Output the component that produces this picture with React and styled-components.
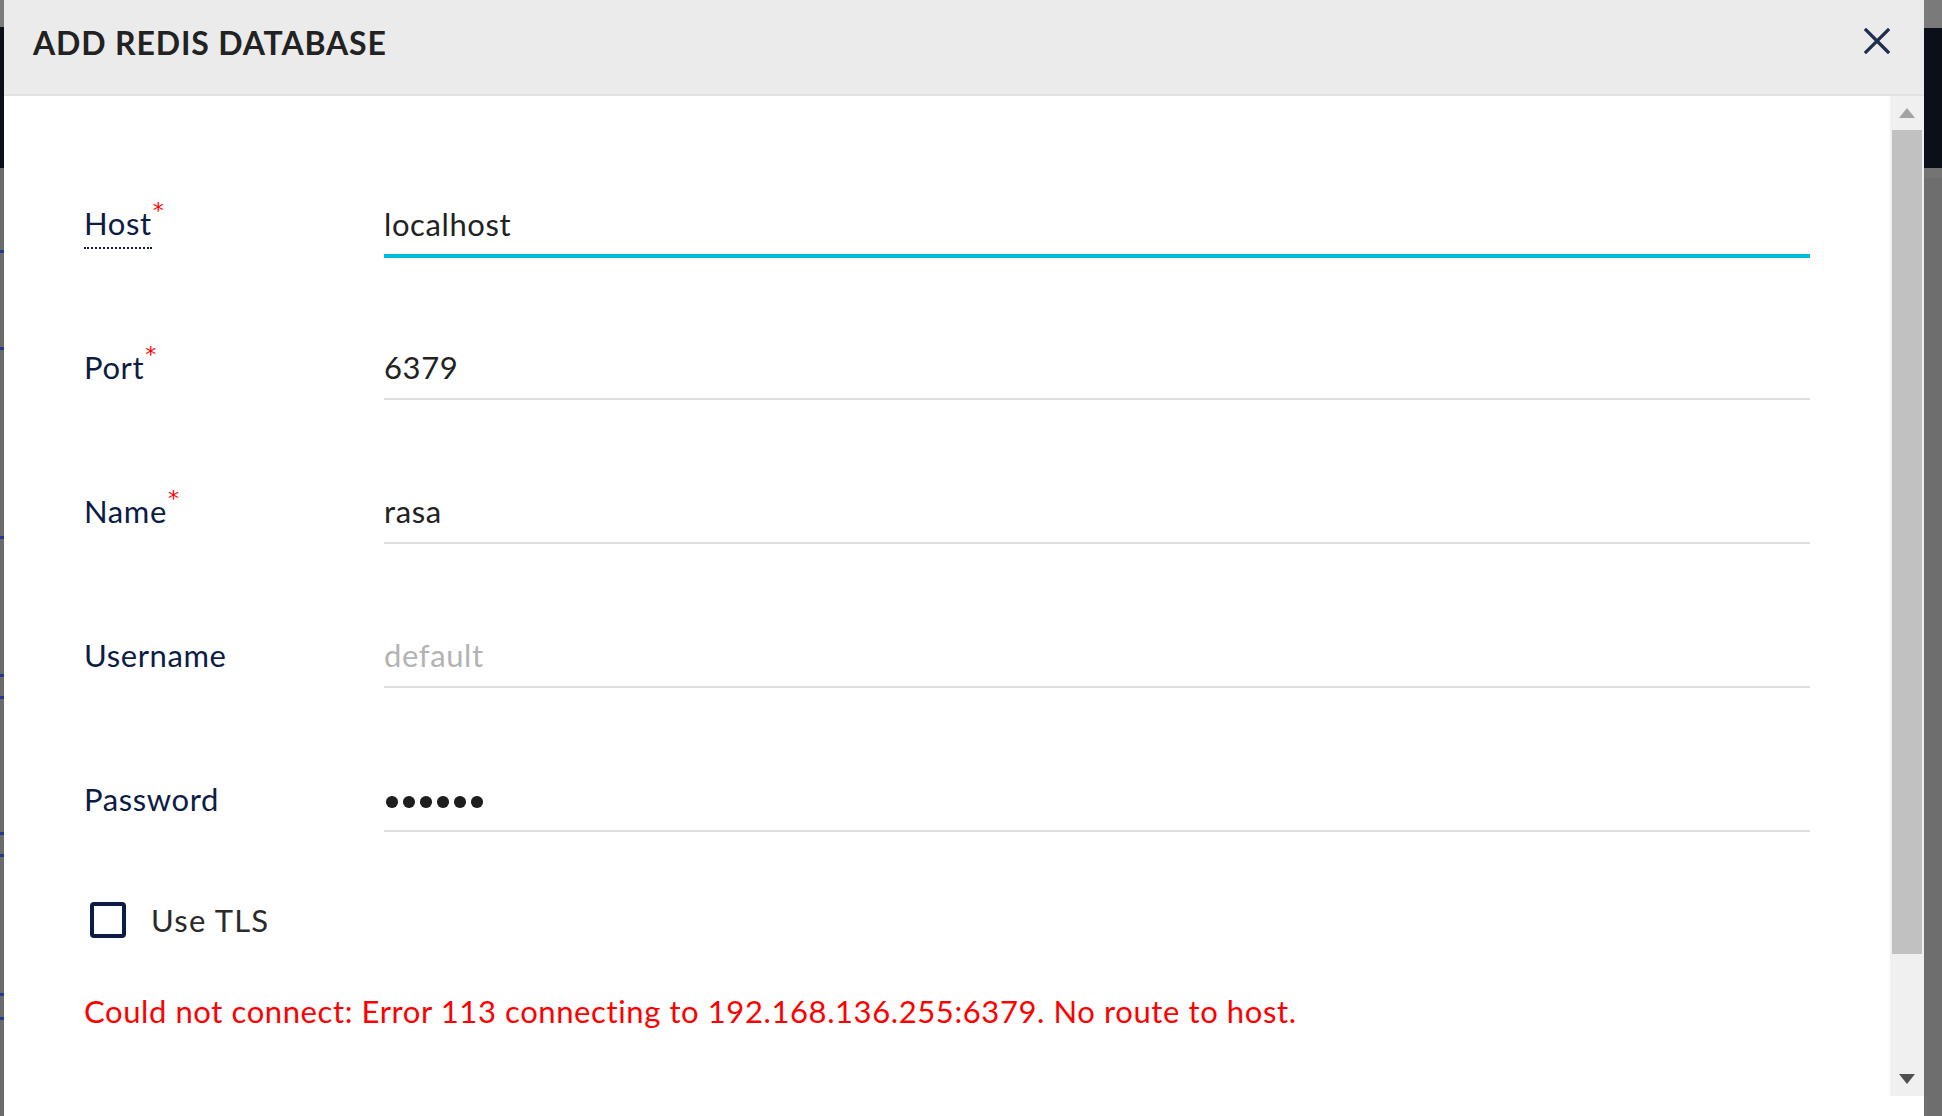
import React from "react";
import styled, { createGlobalStyle } from "styled-components";

const fields = [
  { label: "Host", value: "localhost", required: true, focused: true, hint: true },
  { label: "Port", value: "6379", required: true },
  { label: "Name", value: "rasa", required: true },
  { label: "Username", placeholder: "default" },
  { label: "Password", secret: 6 },
];

function CloseIcon() {
  return (
    <svg width="26" height="26" viewBox="0 0 26 26">
      <path d="M2 2 L24 24 M24 2 L2 24" stroke="#1f2d4f" strokeWidth="3.2" strokeLinecap="square" />
    </svg>
  );
}

function Arrow({ down, color }) {
  return (
    <svg width="16" height="10" viewBox="0 0 16 10">
      <path d={down ? "M0 0 H16 L8 10 Z" : "M0 10 H16 L8 0 Z"} fill={color} />
    </svg>
  );
}

function App() {
  return (
    <>
      <GlobalStyle />
      <Page>
        <LeftEdge />
        <Dialog>
          <Header>
            <Title>ADD REDIS DATABASE</Title>
            <CloseButton aria-label="Close">
              <CloseIcon />
            </CloseButton>
          </Header>

          <Body>
            <Content>
              {fields.map((f) => (
                <FieldRow key={f.label}>
                  <LabelCell>
                    <LabelText $hint={f.hint}>{f.label}</LabelText>
                    {f.required && <Asterisk>*</Asterisk>}
                  </LabelCell>
                  {f.secret ? (
                    <SecretBox>
                      {Array.from({ length: f.secret }).map((_, i) => (
                        <Dot key={i} />
                      ))}
                    </SecretBox>
                  ) : (
                    <Input
                      $focused={f.focused}
                      defaultValue={f.value || ""}
                      placeholder={f.placeholder}
                    />
                  )}
                </FieldRow>
              ))}

              <CheckRow>
                <CheckBox />
                <CheckLabel>Use TLS</CheckLabel>
              </CheckRow>

              <ErrorText>
                Could not connect: Error 113 connecting to 192.168.136.255:6379. No route to host.
              </ErrorText>
            </Content>

            <ScrollBar>
              <ScrollButton>
                <Arrow color="#a3a3a3" />
              </ScrollButton>
              <Thumb />
              <ScrollButton $end>
                <Arrow down color="#505050" />
              </ScrollButton>
            </ScrollBar>
          </Body>
        </Dialog>
        <RightEdge />
      </Page>
    </>
  );
}

const GlobalStyle = createGlobalStyle`
  html, body {
    margin: 0;
    padding: 0;
    background: #6b6b6b;
    overflow: hidden;
  }
  * {
    box-sizing: border-box;
  }
`;

const Page = styled.div`
  display: flex;
  width: 100vw;
  height: 100vh;
  font-family: Lato, "Open Sans", sans-serif;
`;

const LeftEdge = styled.div`
  width: 4px;
  flex-shrink: 0;
  background: linear-gradient(
    to bottom,
    #7a7a7a 0 27px,
    #0b0f17 27px 168px,
    #6b6b6b 168px 250px,
    #1d3d8f 250px 253px,
    #6b6b6b 253px 347px,
    #1d3d8f 347px 350px,
    #6b6b6b 350px 536px,
    #1d3d8f 536px 539px,
    #6b6b6b 539px 674px,
    #1d3d8f 674px 677px,
    #6b6b6b 677px 696px,
    #1d3d8f 696px 699px,
    #6b6b6b 699px 832px,
    #1d3d8f 832px 835px,
    #6b6b6b 835px 854px,
    #1d3d8f 854px 857px,
    #6b6b6b 857px 993px,
    #1d3d8f 993px 996px,
    #6b6b6b 996px 1017px,
    #1d3d8f 1017px 1020px,
    #6b6b6b 1020px
  );
`;

const RightEdge = styled.div`
  flex: 1;
  background: linear-gradient(
    to bottom,
    #7a7a7a 0 28px,
    #0b0f17 28px 168px,
    #747474 168px 178px,
    #6e6e6e 178px
  );
`;

const Dialog = styled.div`
  width: 1920px;
  flex-shrink: 0;
  display: flex;
  flex-direction: column;
  background: #fff;
`;

const Header = styled.div`
  height: 96px;
  flex-shrink: 0;
  display: flex;
  align-items: center;
  justify-content: space-between;
  padding: 0 34px 0 29px;
  background: #ebebeb;
  border-bottom: 2px solid #e1e1e1;
`;

const Title = styled.h2`
  margin: 0 0 9px;
  font-family: Lato, sans-serif;
  font-weight: 700;
  font-size: 32px;
  letter-spacing: 0.85px;
  color: #222;
`;

const CloseButton = styled.button`
  display: flex;
  padding: 0;
  margin-bottom: 12px;
  border: none;
  background: none;
  cursor: pointer;
`;

const Body = styled.div`
  flex: 1;
  display: flex;
  align-items: flex-start;
  min-height: 0;
`;

const Content = styled.div`
  flex: 1;
  padding: 16px 0 0 80px;
  font-size: 31px;
  letter-spacing: 0.6px;
`;

const FieldRow = styled.div`
  display: grid;
  grid-template-columns: 300px 1426px;
  align-items: end;
  height: 144px;
`;

const LabelCell = styled.div`
  display: flex;
  align-items: flex-start;
  padding-bottom: 15px;
  line-height: 36px;
  color: #0c1d45;
`;

const LabelText = styled.span`
  ${(p) =>
    p.$hint &&
    `
    padding-bottom: 6px;
    margin-bottom: -8px;
    border-bottom: 2px dotted #0c1d45;
  `}
`;

const Asterisk = styled.span`
  color: #ff0000;
  font-family: "DejaVu Sans", sans-serif;
  font-size: 22px;
  line-height: 22px;
  margin: -5px 0 0 1px;
`;

const Input = styled.input`
  display: block;
  width: 100%;
  height: 56px;
  padding: 0 0 9px;
  border: none;
  border-bottom: ${(p) => (p.$focused ? "4px solid #00bcd6" : "2px solid #dedede")};
  margin-bottom: ${(p) => (p.$focused ? "-2px" : "0")};
  outline: none;
  background: transparent;
  font-family: Lato, sans-serif;
  font-size: 31px;
  letter-spacing: 0.6px;
  color: #222;

  &::placeholder {
    color: #b3b3b3;
  }
`;

const SecretBox = styled.div`
  display: flex;
  align-items: center;
  gap: 5.5px;
  height: 56px;
  padding: 0 0 2px 2px;
  border-bottom: 2px solid #dedede;
`;

const Dot = styled.span`
  width: 11.5px;
  height: 11.5px;
  border-radius: 50%;
  background: #1e1e1e;
`;

const CheckRow = styled.div`
  display: flex;
  align-items: center;
  gap: 25px;
  margin-top: 70px;
  padding-left: 6px;
`;

const CheckBox = styled.span`
  width: 36px;
  height: 36px;
  border: 4px solid #0c1d45;
  border-radius: 4px;
`;

const CheckLabel = styled.span`
  line-height: 36px;
  letter-spacing: 1.2px;
  color: #2a2a2a;
`;

const ErrorText = styled.p`
  margin: 55px 0 0;
  line-height: 36px;
  color: #ff0000;
`;

const ScrollBar = styled.div`
  width: 34px;
  height: 1000px;
  flex-shrink: 0;
  display: flex;
  flex-direction: column;
  background: #f0f0f0;
`;

const ScrollButton = styled.div`
  height: 34px;
  flex-shrink: 0;
  display: flex;
  align-items: center;
  justify-content: center;
  margin-top: ${(p) => (p.$end ? "auto" : "0")};
`;

const Thumb = styled.div`
  height: 824px;
  margin: 0 2px;
  background: #c1c1c1;
`;

export default App;
